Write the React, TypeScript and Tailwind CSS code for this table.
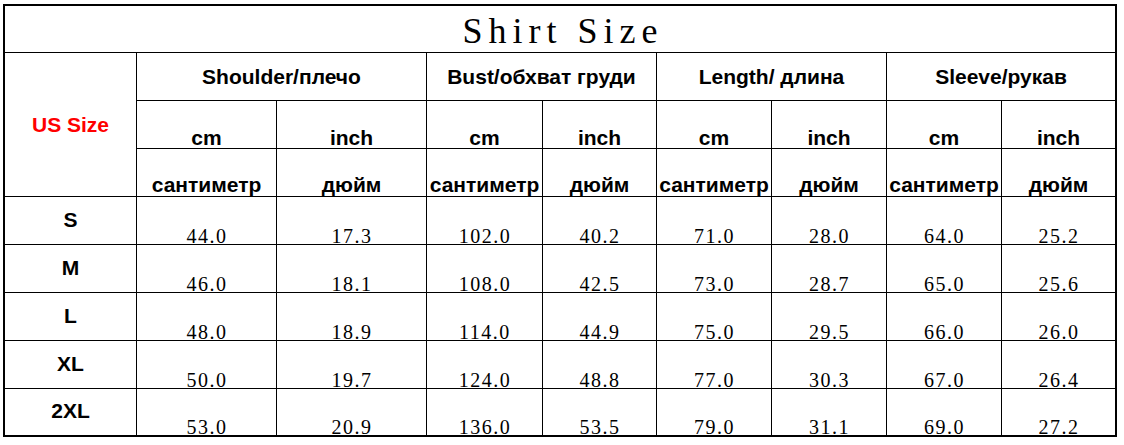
const groups = ["Shoulder/плечо", "Bust/обхват груди", "Length/ длина", "Sleeve/рукав"];

const rows = [
  { size: "S", values: ["44.0", "17.3", "102.0", "40.2", "71.0", "28.0", "64.0", "25.2"] },
  { size: "M", values: ["46.0", "18.1", "108.0", "42.5", "73.0", "28.7", "65.0", "25.6"] },
  { size: "L", values: ["48.0", "18.9", "114.0", "44.9", "75.0", "29.5", "66.0", "26.0"] },
  { size: "XL", values: ["50.0", "19.7", "124.0", "48.8", "77.0", "30.3", "67.0", "26.4"] },
  { size: "2XL", values: ["53.0", "20.9", "136.0", "53.5", "79.0", "31.1", "69.0", "27.2"] },
];

const sans = "font-['Liberation_Sans',Arial,sans-serif]";
const serif = "font-['Liberation_Serif','Times_New_Roman',serif]";

export default function App() {
  return (
    <div className="w-[1124px] h-[445px] bg-white pl-[3px] pt-[4px]">
      <div className="w-[1114px] border-2 border-black bg-black">
        <div className="grid grid-cols-[131px_139px_149px_115px_113px_114px_114px_114px_113px] grid-rows-[46px_47px_47px_47px_47px_47px_47px_47px_46px] gap-px text-black">
          <div
            className={`col-span-9 bg-white flex items-center justify-center pt-[3px] pl-[6px] text-[36px] tracking-[6px] leading-none ${serif}`}
          >
            Shirt Size
          </div>

          <div
            className={`row-span-3 bg-white flex items-center justify-center text-[21px] font-bold text-[#ff0000] ${sans}`}
          >
            US Size
          </div>
          {groups.map((g) => (
            <div
              key={g}
              className={`col-span-2 bg-white flex items-center justify-center text-[21px] font-bold whitespace-nowrap ${sans}`}
            >
              {g}
            </div>
          ))}

          {groups.map((g) =>
            ["cm", "inch"].map((u) => (
              <div
                key={g + u}
                className={`bg-white flex items-end justify-center text-[21px] font-bold leading-none ${sans}`}
              >
                {u}
              </div>
            ))
          )}
          {groups.map((g) =>
            ["сантиметр", "дюйм"].map((u) => (
              <div
                key={g + u}
                className={`bg-white flex items-end justify-center pb-px text-[21px] font-bold leading-none whitespace-nowrap ${sans}`}
              >
                {u}
              </div>
            ))
          )}

          {rows.map((r) => (
            <>
              <div
                key={r.size}
                className={`bg-white flex items-center justify-center pb-[2px] text-[21px] font-bold ${sans}`}
              >
                {r.size}
              </div>
              {r.values.map((v, i) => (
                <div
                  key={r.size + i}
                  className={`bg-white flex items-end justify-center pl-[1px] text-[20px] tracking-[1.5px] leading-[16px] ${serif}`}
                >
                  {v}
                </div>
              ))}
            </>
          ))}
        </div>
      </div>
    </div>
  );
}
